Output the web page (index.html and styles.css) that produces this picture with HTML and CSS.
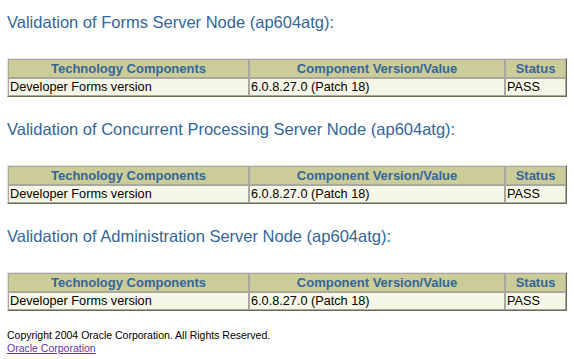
FILE: index.html
```html
<!DOCTYPE html>
<html>
<head>
<meta charset="utf-8">
<link rel="stylesheet" href="styles.css">
</head>
<body>
<div class="page">
  <section class="block">
    <h2 class="title">Validation of Forms Server Node (ap604atg):</h2>
    <table class="grid">
      <tr><th class="c1">Technology Components</th><th class="c2">Component Version/Value</th><th class="c3">Status</th></tr>
      <tr><td>Developer Forms version</td><td>6.0.8.27.0 (Patch 18)</td><td>PASS</td></tr>
    </table>
  </section>
  <section class="block">
    <h2 class="title">Validation of Concurrent Processing Server Node (ap604atg):</h2>
    <table class="grid">
      <tr><th class="c1">Technology Components</th><th class="c2">Component Version/Value</th><th class="c3">Status</th></tr>
      <tr><td>Developer Forms version</td><td>6.0.8.27.0 (Patch 18)</td><td>PASS</td></tr>
    </table>
  </section>
  <section class="block">
    <h2 class="title">Validation of Administration Server Node (ap604atg):</h2>
    <table class="grid">
      <tr><th class="c1">Technology Components</th><th class="c2">Component Version/Value</th><th class="c3">Status</th></tr>
      <tr><td>Developer Forms version</td><td>6.0.8.27.0 (Patch 18)</td><td>PASS</td></tr>
    </table>
  </section>
  <footer class="foot">
    <div class="copy">Copyright 2004 Oracle Corporation. All Rights Reserved.</div>
    <a class="link" href="#">Oracle Corporation</a>
  </footer>
</div>
</body>
</html>
```
FILE: styles.css
```css
html, body { margin: 0; padding: 0; background: #ffffff; }
body { font-family: "Liberation Sans", Arial, sans-serif; }
.page { padding: 12px 7px 0 7px; display: flex; flex-direction: column; }
.block { display: flex; flex-direction: column; margin-bottom: 22px; }
.title {
  margin: 0 0 26px 0;
  font-size: 16.5px; line-height: 20px; font-weight: normal;
  color: #336699;
}
.grid {
  width: 100%;
  border-collapse: separate; border-spacing: 0;
  border: 1px solid; border-color: #e4e4e4 #6b6b55 #6b6b55 #e4e4e4;
  font-size: 12.7px;
}
.grid th, .grid td {
  border: 1px solid #a8a8a0;
  padding: 0 1px; height: 16px; line-height: 16px;
}
.grid th { background: #cccc99; color: #336699; font-weight: bold; font-size: 13px; text-align: center; height: 17px; line-height: 17px; }
.grid td { background: #f7f7e7; color: #000; text-align: left; }
.c1 { width: 237px; }
.c2 { width: 252px; }
.foot { margin-top: -4px; font-size: 10.5px; line-height: 13px; display: flex; flex-direction: column; }
.copy { color: #000; }
.link { color: #663399; text-decoration: underline; align-self: flex-start; }
```
